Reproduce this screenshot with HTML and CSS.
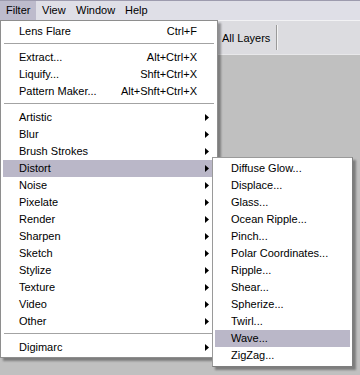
FILE: index.html
```html
<!DOCTYPE html>
<html lang="en">
<head>
    <meta charset="UTF-8">
    <title>Filter menu</title>
    <link rel="stylesheet" href="styles.css">
</head>
<body>
    <div class="app">
        <!-- menu bar -->
        <div class="menubar">
            <span class="menubar-item filter active">Filter</span>
            <span class="menubar-item view">View</span>
            <span class="menubar-item window">Window</span>
            <span class="menubar-item">Help</span>
        </div>
        <!-- options bar -->
        <div class="options">
            <span class="options-label">All Layers</span>
            <span class="options-sep"></span>
        </div>
        <div class="workspace"></div>

        <!-- Filter dropdown -->
        <div class="menu main-menu">
            <div class="item"><span>Lens Flare</span><span class="key">Ctrl+F</span></div>
            <div class="sep"></div>
            <div class="item"><span>Extract...</span><span class="key">Alt+Ctrl+X</span></div>
            <div class="item"><span>Liquify...</span><span class="key">Shft+Ctrl+X</span></div>
            <div class="item"><span>Pattern Maker...</span><span class="key">Alt+Shft+Ctrl+X</span></div>
            <div class="sep"></div>
            <div class="item sub"><span>Artistic</span></div>
            <div class="item sub"><span>Blur</span></div>
            <div class="item sub"><span>Brush Strokes</span></div>
            <div class="item sub active"><span>Distort</span>
                <!-- Distort submenu -->
                <div class="menu submenu">
                    <div class="item"><span>Diffuse Glow...</span></div>
                    <div class="item"><span>Displace...</span></div>
                    <div class="item"><span>Glass...</span></div>
                    <div class="item"><span>Ocean Ripple...</span></div>
                    <div class="item"><span>Pinch...</span></div>
                    <div class="item"><span>Polar Coordinates...</span></div>
                    <div class="item"><span>Ripple...</span></div>
                    <div class="item"><span>Shear...</span></div>
                    <div class="item"><span>Spherize...</span></div>
                    <div class="item"><span>Twirl...</span></div>
                    <div class="item active"><span>Wave...</span></div>
                    <div class="item"><span>ZigZag...</span></div>
                </div>
            </div>
            <div class="item sub"><span>Noise</span></div>
            <div class="item sub"><span>Pixelate</span></div>
            <div class="item sub"><span>Render</span></div>
            <div class="item sub"><span>Sharpen</span></div>
            <div class="item sub"><span>Sketch</span></div>
            <div class="item sub"><span>Stylize</span></div>
            <div class="item sub"><span>Texture</span></div>
            <div class="item sub"><span>Video</span></div>
            <div class="item sub"><span>Other</span></div>
            <div class="sep"></div>
            <div class="item sub"><span>Digimarc</span></div>
        </div>
    </div>
</body>
</html>
```

FILE: styles.css
```css
body {
    margin: 0;
    font-family: "Liberation Sans", Arial, sans-serif;
    font-size: 11px;
    color: #000;
    background: #c0c0c0;
}
.app {
    position: relative;
    width: 360px;
    height: 375px;
    display: flex;
    flex-direction: column;
    overflow: hidden;
}
.menubar {
    display: flex;
    height: 19px;
    border-top: 1px solid #9d9bae;
    background-color: #dfdfe7;
}
.menubar-item {
    padding: 0 6px;
    line-height: 19px;
    white-space: nowrap;
}
/* fixed widths so the labels sit where the Tahoma ones do */
.menubar-item.filter {
    width: 24px;
}
.menubar-item.view {
    width: 22px;
}
.menubar-item.window {
    width: 37px;
}
.menubar-item.active {
    background-color: #bdbbcc;
}
/* second row, mostly hidden under the menu */
.options {
    display: flex;
    align-items: center;
    height: 33px;
    border-top: 1px solid #f2f2f4;
    border-bottom: 1px solid #e8e8ea;
    background-color: #dcdce0;
}
.options-label {
    width: 54px;
    margin-left: 222px;
    white-space: nowrap;
}
.options-sep {
    width: 1px;
    height: 25px;
    background-color: #9a9a9a;
    border-right: 1px solid #f4f4f4;
}
.workspace {
    flex: 1;
    background-color: #c0c0c0;
}
.menu {
    position: absolute;
    background-color: #fff;
    border: 1px solid #8e8e8e;
    box-shadow: 3px 3px 2px rgba(0, 0, 0, .35);
}
.main-menu {
    left: 0;
    top: 20px;
    width: 209px;
    padding: 2px 5px 1px 2px;
}
.submenu {
    left: 100%;
    top: -3px;
    width: 135px;
    padding: 2px;
    border-color: #9a9a9a #7e7e7e #7e7e7e #9a9a9a;
}
.item {
    position: relative;
    display: flex;
    height: 17px;
    line-height: 17px;
    padding-left: 16px;
    padding-right: 15px;
    white-space: nowrap;
}
.item .key {
    margin-left: auto;
}
.item.active {
    background-color: #bab7c8;
}
/* submenu arrow */
.item.sub::after {
    content: "";
    position: absolute;
    left: 202px;
    top: 5px;
    width: 4px;
    height: 7px;
    background-color: #000;
    clip-path: polygon(0 0, 100% 50%, 0 100%);
}
.sep {
    height: 1px;
    margin: 3px -2px 5px 1px;
    background-color: #a3a3a3;
}
```
